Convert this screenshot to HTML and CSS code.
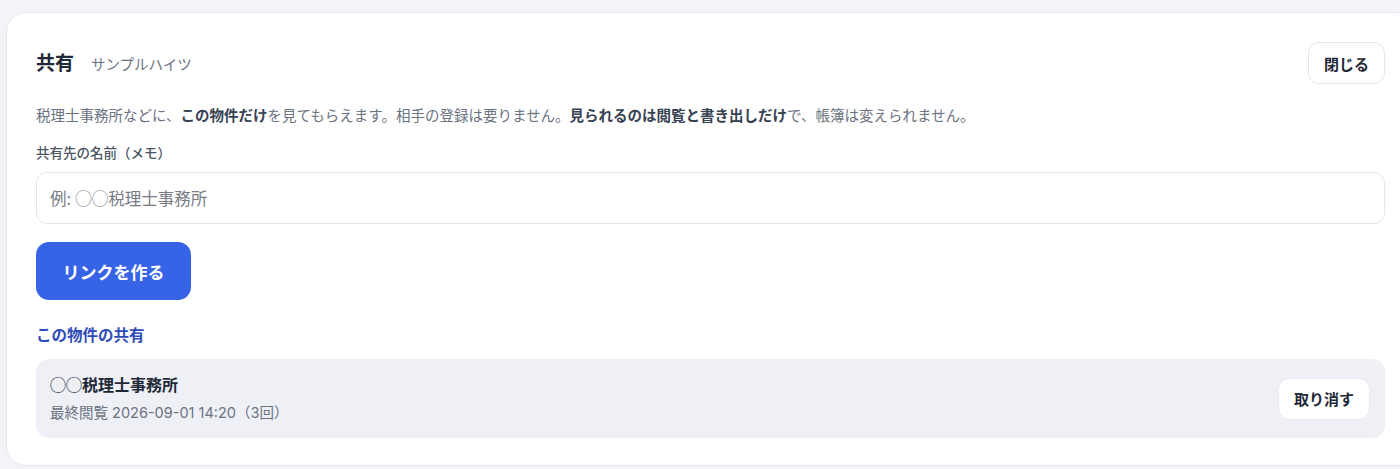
FILE: index.html
```html
<!DOCTYPE html>
<html lang="ja">
<head>
<meta charset="utf-8">
<title>共有</title>
<link rel="stylesheet" href="styles.css">
</head>
<body>
<div class="page">
  <section class="card">
    <header class="head">
      <div class="titles">
        <h1 class="title">共有</h1>
        <span class="subtitle">サンプルハイツ</span>
      </div>
      <button class="btn-light close">閉じる</button>
    </header>
    <p class="desc">税理士事務所などに、<b>この物件だけ</b>を見てもらえます。相手の登録は要りません。<b>見られるのは閲覧と書き出しだけ</b>で、帳簿は変えられません。</p>
    <label class="label" for="memo">共有先の名前（メモ）</label>
    <input id="memo" class="input" type="text" placeholder="例: ◯◯税理士事務所">
    <div class="actions">
      <button class="btn-primary">リンクを作る</button>
    </div>
    <h2 class="section">この物件の共有</h2>
    <ul class="list">
      <li class="item">
        <div class="info">
          <div class="name">◯◯税理士事務所</div>
          <div class="meta">最終閲覧 2026-09-01 14:20（3回）</div>
        </div>
        <button class="btn-light revoke">取り消す</button>
      </li>
    </ul>
  </section>
</div>
</body>
</html>
```

FILE: styles.css
```css
html, body {
  margin: 0;
  padding: 0;
  background: #f4f4f8;
  overflow: hidden;
}
body {
  font-family: "Noto Sans", "Noto Sans CJK JP", sans-serif;
  color: #1f2937;
}
.page {
  padding: 12px 0 0 6px;
}
.card {
  box-sizing: border-box;
  width: 1410px;
  background: #ffffff;
  border: 1px solid #e6e7ee;
  border-radius: 20px;
  padding: 29px 30px 27px 29px;
}
.head {
  display: flex;
  align-items: center;
  justify-content: space-between;
  height: 42px;
}
.titles {
  display: flex;
  align-items: baseline;
  gap: 17px;
}
.title {
  margin: 0;
  font-size: 19px;
  font-weight: 700;
  color: #1f2937;
  line-height: 1;
}
.subtitle {
  font-size: 14.5px;
  color: #6b7280;
}
.btn-light {
  font-family: inherit;
  background: #ffffff;
  border: 1px solid #e5e7eb;
  border-radius: 11px;
  font-size: 15px;
  font-weight: 600;
  color: #1f2937;
  height: 42px;
  padding: 0 10px;
  cursor: pointer;
}
.close {
  width: 77px;
}
.desc {
  margin: 21px 0 0;
  font-size: 14.5px;
  line-height: 20px;
  color: #6b7280;
}
.desc b {
  color: #374151;
  font-weight: 700;
}
.label {
  display: block;
  margin-top: 19px;
  font-size: 13.5px;
  line-height: 18px;
  color: #4b5563;
  font-weight: 500;
}
.input {
  display: block;
  box-sizing: border-box;
  margin-top: 10px;
  width: 100%;
  height: 52px;
  border: 1px solid #e5e7eb;
  border-radius: 11px;
  padding: 0 13px;
  font-family: inherit;
  font-size: 16.5px;
  color: #1f2937;
  background: #fff;
  outline: none;
}
.input::placeholder {
  color: #777b84;
}
.actions {
  margin-top: 18px;
  display: flex;
}
.btn-primary {
  font-family: inherit;
  width: 155px;
  height: 58px;
  border: 0;
  border-radius: 13px;
  background: #3763e6;
  color: #ffffff;
  font-size: 17px;
  font-weight: 700;
  cursor: pointer;
}
.section {
  margin: 25px 0 0;
  font-size: 15.5px;
  line-height: 20px;
  font-weight: 700;
  color: #2f4bb8;
}
.list {
  list-style: none;
  margin: 14px 0 0;
  padding: 0;
}
.item {
  display: flex;
  align-items: center;
  justify-content: space-between;
  box-sizing: border-box;
  height: 79px;
  background: #eef0f6;
  border-radius: 13px;
  padding: 0 15px 0 14px;
}
.info {
  display: flex;
  flex-direction: column;
  gap: 9px;
}
.name {
  font-size: 16px;
  line-height: 20px;
  font-weight: 700;
  color: #1f2937;
}
.meta {
  font-family: "Inter", "Noto Sans CJK JP", sans-serif;
  font-size: 14.5px;
  line-height: 18px;
  color: #6b7280;
}
.revoke {
  width: 92px;
  border-color: #e8eaf0;
}
```
